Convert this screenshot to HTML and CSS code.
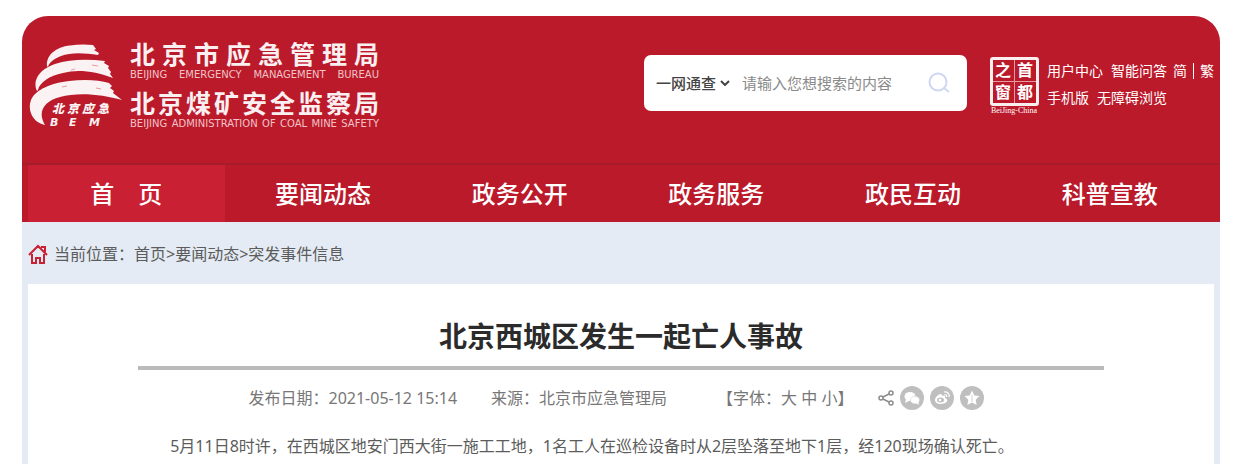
FILE: index.html
```html
<!DOCTYPE html>
<html lang="zh-CN">
<head>
<meta charset="utf-8">
<meta name="viewport" content="width=device-width, initial-scale=1">
<title>北京西城区发生一起亡人事故</title>
<link rel="stylesheet" href="styles.css">
</head>
<body>
<div class="page">
  <header class="masthead">
    <div class="brand">
      <svg class="brand-logo" viewBox="0 0 94 84" role="img" aria-label="北京应急">
        <g fill="#fbf3f3">
          <path d="M19 22C18 11 28 3 42 1.500Q53 0 65 1L68 5L66 6L71 9L70 11C57 9 43 8 33 12C25 15 21 19 20 23Z"/>
          <path d="M9 47C4 36 12 25 27 20C42 15 60 15 77 17L76 19L81 22L80 24L83 28L82 30L85 34C67 27 49 25 35 29C21 32 12 38 10 46Z"/>
          <path d="M17 81C5 79-1 66 3 56C8 45 24 39 41 37C57 35 71 36 81 39L84 42L82 44L86 47L85 49L94 56C74 50 49 48 32 53C16 57 9 68 17 81Z"/>
          <text class="logo-cn" x="24 39 54 69" y="69">北京应急</text>
          <text class="logo-en" x="22 41 61" y="82">BEM</text>
        </g>
        <g fill="none" stroke="#bb1a2b" stroke-width="1" opacity=".4">
          <path d="M43 26l4-1M64 21l6 1M34 43l5-1M68 44l5 1"/>
        </g>
      </svg>
      <div class="brand-names">
        <div class="name-cn">北京市应急管理局</div>
        <div class="name-en">BEIJING EMERGENCY MANAGEMENT BUREAU</div>
        <div class="name-cn name-second">北京煤矿安全监察局</div>
        <div class="name-en">BEIJING ADMINISTRATION OF COAL MINE SAFETY</div>
      </div>
    </div>

    <form class="search">
      <label class="scope">
        <select class="scope-select" aria-label="搜索范围"><option>一网通查</option></select>
        <svg class="scope-arrow" viewBox="0 0 10 6" aria-hidden="true"><path d="M1 1l4 4 4-4"/></svg>
      </label>
      <input class="search-input" type="text" placeholder="请输入您想搜索的内容" aria-label="搜索内容">
      <button class="search-button" type="button" aria-label="搜索">
        <svg viewBox="0 0 24 24"><circle cx="11" cy="11" r="8.500"/><path d="M17 17l5 4"/></svg>
      </button>
    </form>

    <div class="tools">
      <a class="capital" href="#">
        <span class="seal"><span>之</span><span>首</span><span>窗</span><span>都</span></span>
        <span class="seal-caption">BeiJing-China</span>
      </a>
      <div class="tool-links">
        <div class="tool-row"><a href="#">用户中心</a><span class="tool-group"><a href="#">智能问答</a><a href="#">简</a><i class="divider"></i><a href="#">繁</a></span></div>
        <div class="tool-row"><a href="#">手机版</a><a href="#">无障碍浏览</a></div>
      </div>
    </div>
  </header>

  <nav class="nav">
    <a class="active" href="#">首　页</a>
    <a href="#">要闻动态</a>
    <a href="#">政务公开</a>
    <a href="#">政务服务</a>
    <a href="#">政民互动</a>
    <a href="#">科普宣教</a>
  </nav>

  <div class="crumbs">
    <svg class="home" viewBox="0 0 20 20" aria-hidden="true"><path d="M1 11L10 2l9 9M13 3h4v5M4 10v9h4v-5h4v5h4v-9"/></svg>
    <div>当前位置：<a href="#">首页</a>&gt;<a href="#">要闻动态</a>&gt;<a href="#">突发事件信息</a></div>
  </div>

  <main class="article">
    <h1 class="title">北京西城区发生一起亡人事故</h1>
    <div class="meta">
      <span>发布日期：2021-05-12 15:14</span>
      <span class="source">来源：北京市应急管理局</span>
      <span class="font-size">【字体：<a href="#">大</a> <a href="#">中</a> <a href="#">小</a>】</span>
      <div class="share">
        <svg class="share-mark" viewBox="0 0 16 16" aria-hidden="true"><g fill="none" stroke="#8c8c8c" stroke-width="1.500"><circle cx="3" cy="8" r="2"/><circle cx="13" cy="3" r="2"/><circle cx="13" cy="13" r="2"/><path d="M5 7l6-3M5 9l6 3"/></g></svg>
        <a href="#" aria-label="微信"><svg viewBox="0 0 24 24"><circle cx="12" cy="12" r="12" fill="#bfbfbf"/><ellipse cx="10" cy="10.500" rx="5.500" ry="4.500" fill="#fff"/><path d="M6 13l-1 4 4-2z" fill="#fff"/><ellipse cx="15" cy="14" rx="4.500" ry="3.800" fill="#fff" stroke="#d2d2d2" stroke-width=".6"/><path d="M16 17l3 2-1-4z" fill="#fff"/></svg></a>
        <a href="#" aria-label="微博"><svg viewBox="0 0 24 24"><circle cx="12" cy="12" r="12" fill="#bfbfbf"/><path d="M5 14c0-3 4-6 6-6 1 0 1 1 1 2 3-1 4 0 3 2 5 2 1 6-4 6-4 0-6-2-6-4z" fill="#fff"/><ellipse cx="10.500" cy="14" rx="3.500" ry="2.500" fill="#bfbfbf"/><circle cx="10" cy="14" r="1.300" fill="#fff"/><path d="M14 6c3-1 6 2 5 5M14.500 8.500c2 0 2.500 1 2 2.500" fill="none" stroke="#fff" stroke-width="1.200"/></svg></a>
        <a href="#" aria-label="收藏"><svg viewBox="0 0 24 24"><circle cx="12" cy="12" r="12" fill="#bfbfbf"/><path d="M12 4.500l2.300 4.900 5.200.7-3.800 3.700.9 5.300L12 16.500l-4.600 2.600.9-5.300-3.800-3.700 5.200-.7z" fill="#fff"/><path d="M12 9v7" stroke="#d2d2d2" stroke-width="1"/></svg></a>
      </div>
    </div>
    <p class="text">5月11日8时许，在西城区地安门西大街一施工工地，1名工人在巡检设备时从2层坠落至地下1层，经120现场确认死亡。</p>
  </main>
</div>
</body>
</html>
```
FILE: styles.css
```css
* { box-sizing: border-box; }

body {
  margin: 0;
  padding: 16px 20px 0 22px;
  min-height: 100vh;
  display: flex;
  flex-direction: column;
  background: #fff;
  color: #5c5c5c;
  font: 16px/24px "Noto Sans", "Noto Sans CJK SC", sans-serif;
}

a { color: inherit; text-decoration: none; }

.page {
  flex: 1;
  display: flex;
  flex-direction: column;
  border-radius: 26px 26px 0 0;
  overflow: hidden;
  background: #e4ebf4;
}

.masthead {
  display: flex;
  align-items: flex-start;
  padding: 24px 6px 32px;
  background: #bb1a2b;
  color: #fff;
}

.brand { display: flex; gap: 8px; }
.brand-logo { width: 94px; height: 84px; margin-top: 4px; }
.logo-cn { font: italic 900 12px "Noto Sans CJK SC", sans-serif; }
.logo-en { font: italic bold 11px "DejaVu Sans", sans-serif; }
.brand-names { width: 249px; color: #fbf0f1; }
.name-cn {
  font-size: 25px;
  font-weight: 700;
  line-height: 28px;
  text-align-last: justify;
  white-space: nowrap;
}
.name-second { margin-top: 7px; }
.name-en {
  font: 10px/14px "DejaVu Sans", Verdana, sans-serif;
  text-align-last: justify;
  white-space: nowrap;
  color: #f0c3c8;
}

.search {
  display: flex;
  align-items: center;
  width: 323px;
  height: 56px;
  margin: 15px 20px 0 auto;
  padding: 0 16px 0 12px;
  border-radius: 7px;
  background: #fff;
}
.scope { display: flex; align-items: center; gap: 4px; }
.scope-select {
  appearance: none;
  width: 60px;
  padding: 0;
  border: 0;
  background: none;
  color: #444;
  font: 500 15px/24px "Noto Sans CJK SC", sans-serif;
}
.scope-arrow { width: 10px; height: 6px; fill: none; stroke: #444; stroke-width: 2; }
.search-input {
  flex: 1;
  min-width: 0;
  margin-left: 12px;
  padding: 0;
  border: 0;
  outline: 0;
  background: none;
  font: 15px/24px "Noto Sans CJK SC", sans-serif;
}
.search-input::placeholder { color: #8a8a8a; }
.search-button { width: 24px; height: 24px; padding: 0; border: 0; background: none; }
.search-button svg { display: block; fill: none; stroke: #cfd7f2; stroke-width: 2; }

.tools { display: flex; gap: 6px; margin-top: 17px; }
.capital { display: flex; flex-direction: column; align-items: center; width: 54px; }
.seal {
  display: grid;
  grid-template-columns: 1fr 1fr;
  gap: 1px;
  width: 49px;
  border: 3px solid #fbeeee;
  border-radius: 3px;
  background: #e59aa2;
}
.seal span {
  background: #bb1a2b;
  font-size: 16px;
  font-weight: 700;
  line-height: 21px;
  text-align: center;
}
.seal-caption { font: 8px/10px "Liberation Serif", serif; white-space: nowrap; }
.tool-links { font-size: 14px; line-height: 27px; white-space: nowrap; }
.tool-row { display: flex; gap: 8px; }
.tool-group { display: flex; align-items: center; gap: 6px; }
.divider { width: 1px; height: 16px; background: #fff; }

.nav {
  display: grid;
  grid-template-columns: repeat(6, 1fr);
  padding: 0 12px 0 6px;
  border-top: 2px solid #a61c29;
  background: #bb1a2b;
  color: #fff;
}
.nav a { font-size: 24px; font-weight: 500; line-height: 57px; text-align: center; }
.nav .active { background: #ca2033; }

.crumbs { display: flex; align-items: center; gap: 6px; padding: 20px 6px 18px; }
.crumbs .home { width: 20px; height: 20px; fill: none; stroke: #ca2033; stroke-width: 2; }

.article { flex: 1; margin: 0 6px; padding: 32px 9.2% 4px; background: #fff; }
.title {
  margin: 0;
  padding-bottom: 10px;
  border-bottom: 4px solid #bababa;
  color: #2b2b2b;
  font-size: 28px;
  line-height: 40px;
  text-align: center;
}
.meta {
  display: flex;
  flex-wrap: wrap;
  align-items: center;
  justify-content: center;
  margin-top: 16px;
  padding-right: 10px;
  color: #777;
}
.source { margin-left: 34px; }
.font-size { margin-left: 50px; }
.share { display: flex; align-items: center; gap: 6px; margin-left: 24px; }
.share svg { display: block; width: 24px; height: 24px; }
.share .share-mark { width: 16px; height: 16px; }
.text { margin: 22px 0 0; line-height: 28px; text-indent: 2em; }
```
